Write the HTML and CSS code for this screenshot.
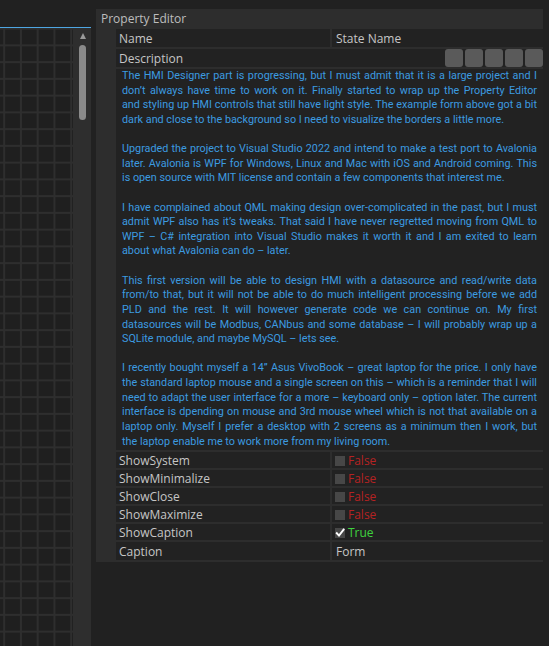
FILE: index.html
```html
<!DOCTYPE html>
<html lang="en">
<head>
<meta charset="utf-8">
<title>Property Editor</title>
<link rel="stylesheet" href="styles.css">
</head>
<body>
<div class="app">
  <div class="designer">
    <div class="designer-top"></div>
    <div class="designer-body">
      <div class="canvas"></div>
      <div class="vscroll">
        <div class="arrow-up"></div>
        <div class="thumb"></div>
      </div>
    </div>
  </div>

  <div class="panel">
    <div class="panel-title">Property Editor</div>
    <div class="panel-body">
      <div class="rows">
        <div class="prop head">
          <div class="cell">Name</div>
          <div class="cell value">State Name</div>
        </div>
        <div class="desc-head">
          <span class="desc-label">Description</span>
          <div class="tools">
            <span class="tool"></span><span class="tool"></span><span class="tool"></span><span class="tool"></span><span class="tool"></span>
          </div>
        </div>
        <div class="desc">
          <p>
            <span class="ln">The HMI Designer part is progressing, but I must admit that it is a large project and I</span>
            <span class="ln">don’t always have time to work on it. Finally started to wrap up the Property Editor</span>
            <span class="ln">and styling up HMI controls that still have light style. The example form above got a bit</span>
            <span class="ln last">dark and close to the background so I need to visualize the borders a little more.</span>
          </p>
          <p>
            <span class="ln">Upgraded the project to Visual Studio 2022 and intend to make a test port to Avalonia</span>
            <span class="ln">later. Avalonia is WPF for Windows, Linux and Mac with iOS and Android coming. This</span>
            <span class="ln last">is open source with MIT license and contain a few components that interest me.</span>
          </p>
          <p>
            <span class="ln">I have complained about QML making design over-complicated in the past, but I must</span>
            <span class="ln">admit WPF also has it’s tweaks. That said I have never regretted moving from QML to</span>
            <span class="ln">WPF – C# integration into Visual Studio makes it worth it and I am exited to learn</span>
            <span class="ln last">about what Avalonia can do – later.</span>
          </p>
          <p>
            <span class="ln">This first version will be able to design HMI with a datasource and read/write data</span>
            <span class="ln">from/to that, but it will not be able to do much intelligent processing before we add</span>
            <span class="ln">PLD and the rest. It will however generate code we can continue on. My first</span>
            <span class="ln">datasources will be Modbus, CANbus and some database – I will probably wrap up a</span>
            <span class="ln last">SQLite module, and maybe MySQL – lets see.</span>
          </p>
          <p>
            <span class="ln">I recently bought myself a 14” Asus VivoBook – great laptop for the price. I only have</span>
            <span class="ln">the standard laptop mouse and a single screen on this – which is a reminder that I will</span>
            <span class="ln">need to adapt the user interface for a more – keyboard only – option later. The current</span>
            <span class="ln">interface is dpending on mouse and 3rd mouse wheel which is not that available on a</span>
            <span class="ln">laptop only. Myself I prefer a desktop with 2 screens as a minimum then I work, but</span>
            <span class="ln last">the laptop enable me to work more from my living room.</span>
          </p>
        </div>
        <div class="prop">
          <div class="cell">ShowSystem</div>
          <div class="cell value"><span class="check"></span><span class="false">False</span></div>
        </div>
        <div class="prop">
          <div class="cell">ShowMinimalize</div>
          <div class="cell value"><span class="check"></span><span class="false">False</span></div>
        </div>
        <div class="prop">
          <div class="cell">ShowClose</div>
          <div class="cell value"><span class="check"></span><span class="false">False</span></div>
        </div>
        <div class="prop">
          <div class="cell">ShowMaximize</div>
          <div class="cell value"><span class="check"></span><span class="false">False</span></div>
        </div>
        <div class="prop">
          <div class="cell">ShowCaption</div>
          <div class="cell value"><span class="check"><svg viewBox="0 0 10 10" width="10" height="10"><path d="M1.8 5.2 L4 7.6 L8.6 1.6" fill="none" stroke="#ffffff" stroke-width="1.9" stroke-linecap="square"/></svg></span><span class="true">True</span></div>
        </div>
        <div class="prop tall">
          <div class="cell">Caption</div>
          <div class="cell value text">Form</div>
        </div>
      </div>
    </div>
  </div>
</div>
</body>
</html>
```

FILE: styles.css
```css
html, body {
  margin: 0;
  padding: 0;
}

body {
  background: #212121;
  width: 549px;
  height: 646px;
  overflow: hidden;
  font-family: "Open Sans", "Noto Sans", sans-serif;
}

.app {
  display: flex;
  height: 646px;
}

/* Left designer surface */
.designer {
  width: 91px;
  flex: none;
  display: flex;
  flex-direction: column;
}

.designer-top {
  height: 27px;
  flex: none;
  border-bottom: 1px solid #4ea6e2;
}

.designer-body {
  flex: 1;
  display: flex;
}

.canvas {
  width: 73px;
  flex: none;
  background-color: #1f1f1f;
  background-image:
    linear-gradient(to right, #2e2e2e 2px, transparent 2px),
    linear-gradient(to bottom, #2e2e2e 2px, transparent 2px);
  background-size: 16.75px 16.75px;
  background-position: 3.2px 16.4px;
}

.vscroll {
  width: 18px;
  flex: none;
  background: #2e2e2e;
  display: flex;
  flex-direction: column;
  align-items: center;
}

.arrow-up {
  margin: 5px 0 0 1px;
  width: 0;
  height: 0;
  border-left: 3.5px solid transparent;
  border-right: 3.5px solid transparent;
  border-bottom: 6px solid #9a9a9a;
}

.thumb {
  margin: 6px 0 0 1px;
  width: 7px;
  height: 75px;
  border-radius: 3.5px;
  background: #8a8a8a;
}

/* Property editor panel */
.panel {
  margin: 9px 0 0 5px;
  width: 447px;
  flex: none;
  align-self: flex-start;
  background: #2d2d2d;
}

.panel-title {
  height: 20px;
  line-height: 20px;
  padding-left: 5px;
  font-size: 12px;
  color: #bdbdbd;
}

.panel-body {
  padding: 0 0 2px 20px;
}

.rows {
  display: flex;
  flex-direction: column;
  gap: 2px;
}

.prop {
  display: grid;
  grid-template-columns: 214px 1fr;
  column-gap: 2px;
  height: 16px;
}

.prop.head,
.prop.tall {
  height: 18px;
}

.cell {
  background: #222222;
  color: #c6c6c6;
  font-size: 12px;
  padding-left: 3px;
  display: flex;
  align-items: center;
  white-space: nowrap;
  overflow: hidden;
}

.cell.value {
  padding-left: 3px;
}

.head .cell.value,
.cell.value.text {
  padding-left: 4px;
}

.desc-head {
  height: 18px;
  background: #222222;
  display: flex;
  align-items: center;
  justify-content: space-between;
}

.desc-label {
  padding-left: 3px;
  font-size: 12px;
  color: #c6c6c6;
}

.tools {
  display: flex;
  gap: 2px;
  height: 18px;
}

.tool {
  width: 18px;
  height: 18px;
  background: #5a5a5a;
  border-radius: 3px;
}

.desc {
  height: 381px;
  background: #222222;
  padding: 0 6px;
  font-family: Roboto, "Liberation Sans", sans-serif;
  font-size: 10.8px;
  line-height: 14.62px;
  color: #3c9be0;
}

.desc p {
  margin: 0 0 14.62px;
}

.desc p:last-child {
  margin-bottom: 0;
}

.ln {
  display: block;
  text-align: justify;
  text-align-last: justify;
  white-space: nowrap;
}

.ln.last {
  text-align-last: left;
}

.check {
  width: 10px;
  height: 10px;
  flex: none;
  margin: 2px 3px 0 0;
  background: #474747;
  display: flex;
}

.check svg {
  display: block;
}

.false {
  color: #b52222;
}

.true {
  color: #3fd23f;
}
```
